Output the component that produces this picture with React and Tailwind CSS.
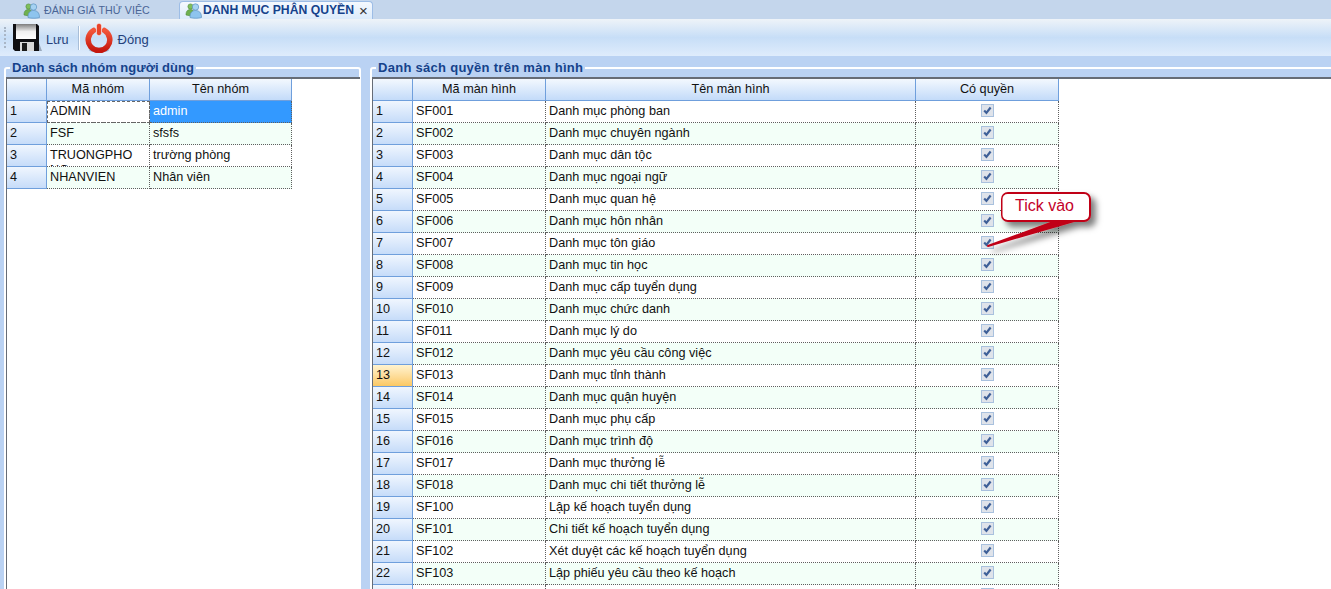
import React from "react";

const groups = [
  ["ADMIN", "admin"],
  ["FSF", "sfsfs"],
  ["TRUONGPHO", "trường phòng"],
  ["NHANVIEN", "Nhân viên"],
];

const screens = [
  ["SF001", "Danh mục phòng ban"],
  ["SF002", "Danh mục chuyên ngành"],
  ["SF003", "Danh mục dân tộc"],
  ["SF004", "Danh mục ngoại ngữ"],
  ["SF005", "Danh mục quan hệ"],
  ["SF006", "Danh mục hôn nhân"],
  ["SF007", "Danh mục tôn giáo"],
  ["SF008", "Danh mục tin học"],
  ["SF009", "Danh mục cấp tuyển dụng"],
  ["SF010", "Danh mục chức danh"],
  ["SF011", "Danh mục lý do"],
  ["SF012", "Danh mục yêu cầu công việc"],
  ["SF013", "Danh mục tỉnh thành"],
  ["SF014", "Danh mục quận huyện"],
  ["SF015", "Danh mục phụ cấp"],
  ["SF016", "Danh mục trình độ"],
  ["SF017", "Danh mục thưởng lễ"],
  ["SF018", "Danh mục chi tiết thưởng lễ"],
  ["SF100", "Lập kế hoạch tuyển dụng"],
  ["SF101", "Chi tiết kế hoạch tuyển dụng"],
  ["SF102", "Xét duyệt các kế hoạch tuyển dụng"],
  ["SF103", "Lập phiếu yêu cầu theo kế hoạch"],
];

function PeopleIcon() {
  return (
    <svg width="18" height="17" viewBox="0 0 18 17" className="shrink-0">
      <circle cx="5.5" cy="4.5" r="2.6" fill="#7fbf5a" stroke="#4f8a3a" strokeWidth="0.6" />
      <path d="M1 13c0-4 1.6-5.500 4.500-5.500S9 9 9 12.500L6 14z" fill="#6fb04e" stroke="#4f8a3a" strokeWidth="0.6" />
      <circle cx="10.500" cy="5" r="3.2" fill="#a5d2f2" stroke="#5d92c2" strokeWidth="0.7" />
      <path d="M5 15.500c0-5 2-7 5.500-7s6 2 6 7c-3 1-8.500 1-11.500 0z" fill="#8ec4ee" stroke="#5d92c2" strokeWidth="0.7" />
    </svg>
  );
}

function SaveIcon() {
  return (
    <svg width="30" height="30" viewBox="0 0 30 30" className="shrink-0">
      <defs>
        <linearGradient id="saveLabel" x1="0" y1="0" x2="0" y2="1">
          <stop offset="0" stopColor="#7d7d7d" />
          <stop offset="0.5" stopColor="#f0f0f0" />
          <stop offset="1" stopColor="#ffffff" />
        </linearGradient>
      </defs>
      <path d="M1 1h24l2 2v25H3l-2-2z" fill="#0f0f12" />
      <rect x="4" y="1" width="20" height="15" fill="url(#saveLabel)" />
      <rect x="8" y="19" width="14" height="9" fill="#d8d8d8" />
      <rect x="10" y="20" width="5" height="8" fill="#1a1a1a" />
      <path d="M27 20l3 8h-3z" fill="#9aa8bb" />
    </svg>
  );
}

function PowerIcon() {
  return (
    <svg width="28" height="30" viewBox="0 0 28 30" className="shrink-0">
      <defs>
        <linearGradient id="powerRed" x1="0" y1="0" x2="0" y2="1">
          <stop offset="0" stopColor="#f2553a" />
          <stop offset="1" stopColor="#c5170e" />
        </linearGradient>
      </defs>
      <ellipse cx="14" cy="27" rx="10" ry="2.500" fill="#9db4cf" />
      <path d="M8.500 7.500a10.800 10.800 0 1 0 11 0" fill="none" stroke="url(#powerRed)" strokeWidth="5.500" strokeLinecap="round" />
      <rect x="11.500" y="0.500" width="5" height="12" rx="2.200" fill="#e8432a" stroke="#fff" strokeWidth="0.5" />
    </svg>
  );
}

function CheckBox() {
  return (
    <svg width="13" height="13" viewBox="0 0 13 13" className="block">
      <rect x="0.5" y="0.5" width="12" height="12" fill="#dfe3ea" stroke="#a9c1de" />
      <path d="M3.200 6.600l2.200 2.300 4.200-5.400" fill="none" stroke="#3e5f97" strokeWidth="2.200" />
    </svg>
  );
}

function HeaderCell({ children }) {
  return (
    <div className="h-[22px] border-r border-b border-[#6f9fdc] bg-gradient-to-b from-[#f3f8fe] to-[#c3dbf9] text-center leading-[21px] text-[#111]">
      {children}
    </div>
  );
}

function RowHead({ n, active }) {
  return (
    <div
      className={
        active
          ? "h-[22px] border-r border-b border-[#6f9fdc] bg-gradient-to-b from-[#fff3cf] to-[#fbc862] pl-[3px] pt-[2px] leading-[16px] text-[#111]"
          : "h-[22px] border-r border-b border-[#6f9fdc] bg-gradient-to-b from-[#f0f6fe] to-[#c6dcf9] pl-[3px] pt-[2px] leading-[16px] text-[#111]"
      }
    >
      {n}
    </div>
  );
}

function Cell({ odd, children, focus, selected }) {
  let cls = odd ? "bg-white" : "bg-[#f3fff8]";
  if (selected) cls = "bg-[#3399ff] text-white";
  return (
    <div
      className={
        "h-[22px] overflow-hidden border-r border-b border-dotted border-[#5f5f5f] pl-[3px] pt-[3px] leading-[15px] " +
        cls +
        (focus ? " outline-1 outline-dashed -outline-offset-1 outline-[#666]" : "")
      }
    >
      {children}
    </div>
  );
}

function CheckCell({ odd }) {
  return (
    <div
      className={
        odd
          ? "flex h-[22px] justify-center border-r border-b border-dotted border-[#5f5f5f] bg-white pt-[3px]"
          : "flex h-[22px] justify-center border-r border-b border-dotted border-[#5f5f5f] bg-[#f3fff8] pt-[3px]"
      }
    >
      <CheckBox />
    </div>
  );
}

export default function App() {
  return (
    <div
      className="relative flex h-[589px] w-[1331px] flex-col overflow-hidden bg-[#bad2f3] text-[12.67px] text-[#111]"
      style={{ fontFamily: '"Liberation Sans", Arial, sans-serif' }}
    >
      {/* Tabs */}
      <div className="flex h-[19px] items-end bg-[#c4d6ec] pl-[23px]">
        <div className="flex h-[17px] w-[156px] items-center gap-[3px] text-[10.7px] text-[#4a6596]">
          <PeopleIcon />
          <span>ĐÁNH GIÁ THỬ VIỆC</span>
        </div>
        <div className="flex h-[18px] w-[194px] items-center rounded-t-[4px] border border-b-0 border-[#9dbde6] bg-gradient-to-b from-[#f5f9fe] to-[#dcebfb] pl-[5px] text-[12.2px] font-bold text-[#15428b]">
          <PeopleIcon />
          <span>DANH MỤC PHÂN QUYỀN</span>
          <span className="ml-[5px] text-[15px] font-normal leading-none text-[#333]">×</span>
        </div>
      </div>

      {/* Toolbar */}
      <div className="flex h-[37px] items-center bg-gradient-to-b from-[#eef3f8] via-[#c7def7] to-[#dfecfc] pl-[4px]">
        <div className="h-[21px] w-[3px] border-l-2 border-dotted border-[#a9b6c6]" />
        <div className="ml-[5px] flex items-center gap-[4px]">
          <SaveIcon />
          <span className="pt-[5px] text-[#24407a]">Lưu</span>
        </div>
        <div className="ml-[9px] h-[24px] w-[2px] border-l border-r border-l-[#a8bed8] border-r-white" />
        <div className="ml-[5px] flex items-center gap-[5px]">
          <PowerIcon />
          <span className="pt-[5px] text-[13px] text-[#24407a]">Đóng</span>
        </div>
      </div>

      {/* Panels */}
      <div className="flex min-h-0 flex-1 gap-[9px] pl-[4px] pt-[4px]">
        <fieldset className="h-[600px] w-[357px] min-w-0 shrink-0 rounded-[3px] border-2 border-white">
          <legend className="ml-[4px] px-[2px] text-[13px] font-bold leading-[15px] text-[#15428b]">Danh sách nhóm người dùng</legend>
          <div className="mt-[2px] h-full w-[354px] border-t-2 border-l border-[#666c76] bg-white">
            <div className="grid grid-cols-[40px_103px_142px]">
              <HeaderCell />
              <HeaderCell>Mã nhóm</HeaderCell>
              <HeaderCell>Tên nhóm</HeaderCell>
              {groups.map((g, i) => (
                <React.Fragment key={g[0]}>
                  <RowHead n={i + 1} />
                  <Cell odd={i % 2 === 0} focus={i === 0}>
                    {g[0]}
                    {i === 2 && (
                      <>
                        <br />
                        NG
                      </>
                    )}
                  </Cell>
                  <Cell odd={i % 2 === 0} selected={i === 0}>
                    {g[1]}
                  </Cell>
                </React.Fragment>
              ))}
            </div>
          </div>
        </fieldset>

        <fieldset className="h-[600px] w-[970px] min-w-0 shrink-0 rounded-[3px] border-2 border-white">
          <legend className="ml-[4px] px-[2px] text-[13px] font-bold leading-[15px] tracking-[0.28px] text-[#15428b]">Danh sách quyền trên màn hình</legend>
          <div className="mt-[2px] h-full w-[965px] border-t-2 border-l border-[#666c76] bg-white">
            <div className="grid grid-cols-[40px_133px_370px_143px]">
              <HeaderCell />
              <HeaderCell>Mã màn hình</HeaderCell>
              <HeaderCell>Tên màn hình</HeaderCell>
              <HeaderCell>Có quyền</HeaderCell>
              {screens.map((s, i) => (
                <React.Fragment key={s[0]}>
                  <RowHead n={i + 1} active={i === 12} />
                  <Cell odd={i % 2 === 0}>{s[0]}</Cell>
                  <Cell odd={i % 2 === 0}>{s[1]}</Cell>
                  <CheckCell odd={i % 2 === 0} />
                </React.Fragment>
              ))}
              <RowHead n="" />
              <Cell odd />
              <Cell odd />
              <CheckCell odd />
            </div>
          </div>
        </fieldset>
      </div>

      {/* Callout over the grid */}
      <div className="absolute left-[980px] top-[186px] h-[70px] w-[125px]">
        <svg width="125" height="70" viewBox="0 0 125 70" className="absolute inset-0">
          <defs>
            <filter id="calloutShadow" x="-20%" y="-20%" width="150%" height="160%">
              <feDropShadow dx="5" dy="5" stdDeviation="3" floodColor="#000" floodOpacity="0.5" />
            </filter>
          </defs>
          <path
            d="M28 7h76a6 6 0 0 1 6 6v16a6 6 0 0 1-6 6H94L8 60 76 35H28a6 6 0 0 1-6-6V13a6 6 0 0 1 6-6z"
            fill="#c00018"
            stroke="#c00018"
            strokeWidth="2"
            strokeLinejoin="round"
            filter="url(#calloutShadow)"
          />
          <rect x="22.500" y="8" width="86.500" height="26" rx="5" fill="#fff" />
        </svg>
        <span className="absolute left-[35px] top-[11px] text-[16px] leading-[18px] text-[#c4002a]">Tick vào</span>
      </div>
    </div>
  );
}
